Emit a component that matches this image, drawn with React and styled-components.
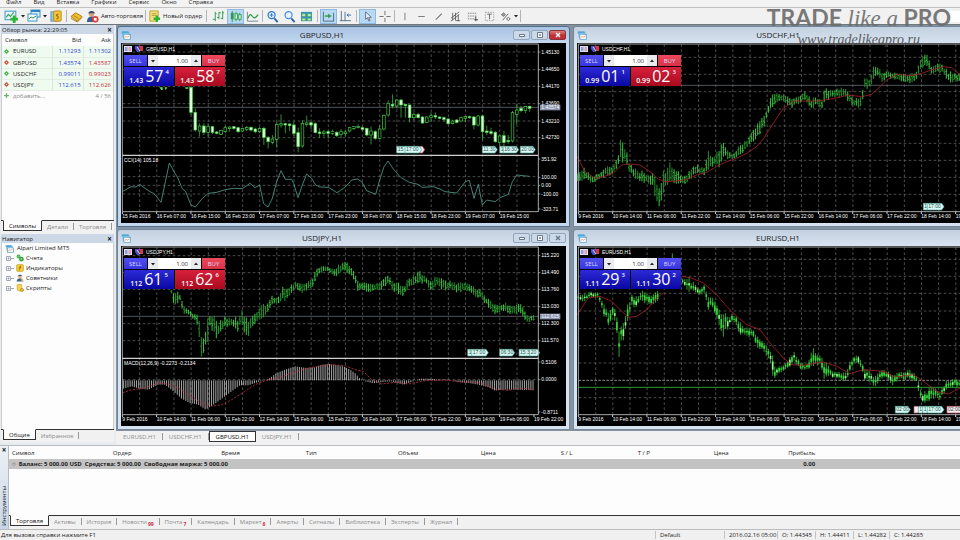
import React from "react";
import styled, { createGlobalStyle, css } from "styled-components";

const UI = '"Open Sans", "Noto Sans", sans-serif';

const Global = createGlobalStyle`
  * { box-sizing: border-box; }
  body { margin: 0; overflow: hidden; background: #f0f0f0; font: 6px/8px ${UI}; color: #1c1c1c; }
  button, input { font: inherit; color: inherit; margin: 0; padding: 0; border: 0; background: none; border-radius: 0; }
  table { border-collapse: collapse; border-spacing: 0; }
  ul { list-style: none; margin: 0; padding: 0; }
`;

const Shell = styled.div`
  position: relative;
  display: flex;
  flex-direction: column;
  height: 100vh;
  overflow: hidden;
`;

/* ---------- menu and toolbar ---------- */

const MenuBar = styled.nav`
  display: flex;
  gap: 12px;
  height: 8px;
  padding-left: 6px;
  background: #f3f3f3;
  border-bottom: 1px solid #c2c2c2;
`;
const MenuItem = styled.button`
  height: 5px;
  line-height: 5px;
`;
const ToolBar = styled.div`
  display: flex;
  align-items: center;
  height: 17px;
  padding-left: 3px;
  background: #f1f1f1;
  border-bottom: 1px solid #6f777e;
`;
const ToolButton = styled.button`
  display: flex;
  align-items: center;
  justify-content: center;
  gap: 2px;
  height: 15px;
  width: ${(p) => (p.$wide ? "auto" : "17px")};
  padding: ${(p) => (p.$wide ? "0 1px" : "0")};
  white-space: nowrap;
  ${(p) => p.$on && css`background: #b9d8f3; box-shadow: inset 0 0 0 1px #8dbbe4;`}
`;
const Split = styled.span`
  width: 1px;
  height: 12px;
  margin: 0 ${(p) => p.$gap || 1}px;
  background: #b4b4b4;
`;
const Search = styled.input`
  width: 13px;
  height: 11px;
  margin-left: auto;
  background: #fff;
`;

const glyphs = {
  newChart: <><rect x="1" y="2" width="10" height="8" fill="#e9f6ff" stroke="#4aa0c8" /><path d="M2 8l2-3 2 2 3-4" stroke="#2f9a52" fill="none" /><path d="M9.500 6v7M6 9.500h7" stroke="#2ab535" strokeWidth="2.600" /></>,
  profiles: <><rect x="4" y="1" width="9" height="7" fill="#d8eefb" stroke="#3f95c4" /><path d="M4 2h9" stroke="#2f83c0" strokeWidth="2" /><rect x="1" y="5" width="9" height="7" fill="#f3fbff" stroke="#3f95c4" /><path d="M2 10l2-2 2 1 3-2" stroke="#2f9a52" fill="none" /></>,
  market: <><rect x="1" y="2" width="8" height="10" fill="#8ec6e8" stroke="#5c93b8" /><rect x="4" y="1" width="8" height="11" rx="1" fill="#f3c63a" stroke="#b98a12" /><path d="M9 4.500H7.500L7 6.500h1.700v3H7" stroke="#8a5b08" fill="none" /></>,
  gold: <><path d="M1 7l5-4 7 4-5 5z" fill="#f0c02e" stroke="#a87b15" /><path d="M1 9l7 4 5-5M4 6l5 3" stroke="#a87b15" fill="none" /></>,
  robot: <><circle cx="6" cy="4" r="3" fill="#d9a172" /><path d="M2 3.500q4-5 8 0z" fill="#2e4a7c" /><path d="M1 13q0-6 5-6t5 6z" fill="#3a5c93" /><circle cx="10" cy="10" r="3.500" fill="#e2382c" /><rect x="8.500" y="8.500" width="3" height="3" fill="#fff" /></>,
  order: <><path d="M2 1h9v8l-3 3H2z" fill="#f4e07d" stroke="#c0a02e" /><path d="M4 4h5M4 6h5" stroke="#b7983a" /><path d="M9.500 6v7M6 9.500h7" stroke="#2ab535" strokeWidth="2.600" /></>,
  bars: <path d="M3.500 2v10M1 10h2.500M3.500 4H5M7.500 2v8M5.500 8h2M7.500 3h2M11.500 1v9M9.500 9h2M11.500 3H13" stroke="#2d9a50" fill="none" />,
  candles: <><path d="M3.500 1v12M7.500 2v10M11.500 3v9" stroke="#2d9a50" /><rect x="2" y="3" width="3" height="7" fill="#2d9a50" /><rect x="6.500" y="4" width="2.500" height="6" fill="#e6fff0" stroke="#2d9a50" /><rect x="10.500" y="5" width="2.500" height="5" fill="#e6fff0" stroke="#2d9a50" /></>,
  line: <><path d="M1.500 2v10H13" stroke="#6f8795" fill="none" /><path d="M2 9c2-5 3-5 5-2s4 1 6-2" stroke="#2ba043" strokeWidth="1.300" fill="none" /></>,
  zoomIn: <><circle cx="6" cy="5.500" r="3.800" fill="#dff0ff" stroke="#2f78cc" strokeWidth="1.300" /><path d="M9 9l3.500 4" stroke="#2f5fae" strokeWidth="2" /><path d="M6 3.500v4M4 5.500h4" stroke="#2f78cc" /></>,
  zoomOut: <><circle cx="6" cy="5.500" r="3.800" fill="#eaf5ff" stroke="#4a8ed6" strokeWidth="1.300" /><path d="M9 9l3.500 4" stroke="#2f5fae" strokeWidth="2" /></>,
  tile: <><rect x="1" y="2" width="12" height="10" fill="#3c8fc0" /><path d="M2 4h4v3H2zM8 4h4v3H8zM2 9h4v2.500H2zM8 9h4v2.500H8z" fill="#bdebb4" stroke="#3da24e" strokeWidth=".6" /></>,
  scroll: <><path d="M1.500 2v10H13M12.500 3v9" stroke="#4c6a86" fill="none" /><path d="M3 6.500h4" stroke="#2ba043" strokeWidth="1.500" /><path d="M6.500 4l4 2.500-4 2.500z" fill="#2ba043" /></>,
  shift: <><path d="M2.500 1v11M1 11.500h12M6.500 2v10" stroke="#54708e" fill="none" /><path d="M13 5.500H9M10.500 4L8.500 5.500l2 1.500" stroke="#3d6cae" fill="none" /></>,
  cursor: <path d="M5 2v8l2-1.800L8.500 12l1.200-.6L8.300 8H11z" fill="#eef4fb" stroke="#4f6276" strokeWidth=".9" />,
  cross: <path d="M7.500 1v4.500M7.500 8.500V13M1.500 7h4.500M9 7h4.500" stroke="#6a6a6a" fill="none" />,
  vline: <path d="M7.500 3v8" stroke="#777" />,
  hline: <path d="M3.500 7h7" stroke="#777" />,
  diag: <path d="M4 10.500L10.500 4" stroke="#666" strokeWidth="1.100" />,
  channel: <path d="M2 9l9-7M2 12l9-7M4 3v8M7 3v8M10 5v7M7 11.500h5" stroke="#555" fill="none" strokeWidth=".9" />,
  fibo: <><path d="M2 3.500h10M2 6.500h10M2 9.500h8" stroke="#777" fill="none" strokeDasharray="1.500 1" /><path d="M10.500 7v5M9 10.500h4" stroke="#444" fill="none" /></>,
  text: <><path d="M2.500 2.500h9v9h-9z" stroke="#999" fill="none" strokeDasharray="1.500 1.200" /><path d="M4.500 4.500h5M7 4.500v5.500" stroke="#666" fill="none" /></>,
  shapes: <><path d="M2.500 5L5 3l2 2-2 2z" fill="#999" stroke="#666" strokeWidth=".8" /><path d="M4 11l6-7M8 9.500l2-1.500 2 1.500-2 2z" stroke="#666" fill="none" /></>,
};

function Icon({ name, size = 13 }) {
  return <svg width={size} height={size} viewBox="0 0 14 14" aria-hidden="true">{glyphs[name]}</svg>;
}
function Arrow() {
  return <svg width="4" height="4" viewBox="0 0 4 4" aria-hidden="true"><path d="M0 1h4L2 3.500z" fill="#222" /></svg>;
}

const toolGroups = [
  { gap: 3, tools: [["bars"], ["candles", true], ["line"]] },
  { gap: 1, tools: [["zoomIn"], ["zoomOut"], ["tile"]] },
  { gap: 2, tools: [["scroll", true], ["shift"]] },
  { gap: 2, tools: [["cursor", true], ["cross"]] },
  { gap: 1, tools: [["vline"], ["hline"], ["diag"], ["channel"], ["fibo"], ["text"]] },
];

/* ---------- side panels ---------- */

const Main = styled.div`
  display: flex;
  flex: none;
`;
const Side = styled.aside`
  display: flex;
  flex-direction: column;
  flex: none;
  width: 116px;
  padding: 0 2px 3px 1px;
  background: #e9ecef;
`;
const Panel = styled.section`
  display: flex;
  flex-direction: column;
  flex: ${(p) => p.$grow} 0 0;
  min-height: 0;
`;
const PanelTitle = styled.header`
  display: flex;
  justify-content: space-between;
  align-items: center;
  height: 9px;
  padding: 0 1px;
  background: #ccd8e6;
`;
const Close = styled.button`
  width: 7px;
  font-size: 8px;
  line-height: 8px;
  font-weight: 700;
  color: #111;
`;
const PanelBody = styled.div`
  flex: 1;
  min-height: 0;
  background: #fdfdfd;
  border: 1px solid #c9cdd2;
  border-top: 0;
  border-bottom: 0;
`;
const Quotes = styled.table`
  width: 100%;
  th { height: 12px; padding: 0 2px 0 3px; font-weight: 400; text-align: right; }
  th:first-child { text-align: left; }
  td { height: 11px; padding: 0 2px; text-align: right; }
  td:first-child { text-align: left; }
`;
const QuoteRow = styled.tr`
  background: #f0fbf0;
  border-bottom: 1px solid #e2eee2;
  td + td { border-left: 1px solid #dde8dd; color: ${(p) => (p.$up ? "#2a3fd0" : "#c8283a")}; }
  td:nth-child(2) { color: #2a3fd0; }
`;
const AddRow = styled.tr`
  color: #8a8a8a;
`;
const SymbolCell = styled.span`
  display: flex;
  align-items: center;
  gap: 4px;
`;
const Tabs = styled.div`
  display: flex;
  flex: none;
  height: ${(p) => p.$tall || 13}px;
  padding-left: ${(p) => p.$indent || 2}px;
  background: #f1f1f1;
  ${(p) => p.$line && css`border-top: 1px solid #333;`}
`;
const Tab = styled.button`
  display: flex;
  align-items: center;
  height: 11px;
  padding: 0 ${(p) => p.$pad || 5}px;
  white-space: nowrap;
  color: #8b8b8b;
  &::after { content: ""; width: 1px; height: 7px; margin-left: ${(p) => p.$pad || 5}px; margin-right: -${(p) => p.$pad || 5}px; background: #999; }
  ${(p) => p.$on && css`
    color: #111;
    background: #fdfdfd;
    border: 1px solid #333;
    border-top-color: ${p.$box ? "#333" : "#fdfdfd"};
    margin-top: ${p.$box ? 0 : -1}px;
    &::after { display: none; }
  `}
`;
const Count = styled.sub`
  align-self: flex-end;
  padding-left: 1px;
  font-size: 5px;
  line-height: 5px;
  font-weight: 700;
  color: #d01f3c;
`;
const Tree = styled.ul`
  && { padding-left: 3px; }
`;
const TreeRow = styled.li`
  display: flex;
  align-items: center;
  gap: ${(p) => (p.$root ? 3 : 2)}px;
  height: 10px;
`;

function Dir({ up, plus }) {
  return (
    <svg width="5" height="5" viewBox="0 0 6 6" aria-hidden="true">
      {plus
        ? <path d="M3 0v6M0 3h6" stroke="#6fae6f" strokeWidth="1.500" />
        : <><path d="M3 0l3 3-3 3-3-3z" fill={up ? "#35b53b" : "#d5452f"} /><circle cx="3" cy="3" r=".8" fill="#fff" /></>}
    </svg>
  );
}
function Expander() {
  return <svg width="9" height="7" viewBox="0 0 9 7" aria-hidden="true"><path d="M1.500 1.500h4v4h-4zM2.500 3.500h2M3.500 2.500v2M6 3.500h3" fill="none" stroke="#8a94a4" strokeWidth=".8" /></svg>;
}

const treeGlyphs = {
  root: <><rect x="3" y="3" width="8" height="7" fill="#e9f6ff" stroke="#3f95c4" /><path d="M1 2h9v3H1z" fill="#4aaad8" /><rect x="4" y="6" width="9" height="7" fill="#fff" stroke="#4b95c4" /><path d="M5 11l2-2 2 1 3-2" stroke="#d87d3f" fill="none" /></>,
  acc: <><circle cx="4.500" cy="4.500" r="3.500" fill="#46b848" /><circle cx="9.500" cy="9" r="4" fill="#2f9d35" /><path d="M3 4h3M8 8h3M8 10h3" stroke="#d9ffd6" /></>,
  ind: <><rect x="1" y="1" width="12" height="12" rx="2" fill="#f2cd33" stroke="#bb9512" /><path d="M9 3.500Q7 3 7 6t-2 5M5 6.500h4" stroke="#5b4708" fill="none" /></>,
  exp: <><path d="M2 4l5-3 5 3z" fill="#25416e" /><circle cx="7" cy="5.500" r="2.500" fill="#e1ad7b" /><path d="M1 13q1-6 6-5 5-1 6 5z" fill="#3c6294" /><circle cx="11" cy="10.500" r="2" fill="#edc83b" /></>,
  scr: <><path d="M2 1h8v11H4l-2-3z" fill="#f5d44e" stroke="#bf9a1c" /><circle cx="10.500" cy="10.500" r="2.800" fill="#e9b92a" stroke="#a8801a" /></>,
};

const quotes = [
  ["EURUSD", "1.11293", "1.11302", true],
  ["GBPUSD", "1.43574", "1.43587", false],
  ["USDCHF", "0.99011", "0.99023", false],
  ["USDJPY", "112.615", "112.626", false],
];
const tree = [["acc", "Счета"], ["ind", "Индикаторы"], ["exp", "Советники"], ["scr", "Скрипты"]];

/* ---------- chart windows ---------- */

const Desk = styled.main`
  flex: 1;
  min-width: 0;
  background: #8593a1;
`;
const Windows = styled.div`
  display: grid;
  grid-template-columns: repeat(2, minmax(453px, 1fr));
  gap: 2px 3px;
  padding: 1px 0 1px 1px;
  overflow: hidden;
`;
const Frame = styled.section`
  padding: 0 3px 3px;
  border: 1px solid ${(p) => (p.$active ? "#50708f" : "#75879a")};
  border-radius: 3px 3px 0 0;
  background: ${(p) => (p.$active ? "linear-gradient(#a9c3e2, #c3d7ee 16px)" : "linear-gradient(#c3d0df, #d7e3f0 16px)")};
`;
const TitleBar = styled.header`
  display: flex;
  align-items: center;
  height: 16px;
`;
const Title = styled.h2`
  flex: 1;
  margin: 0;
  font-size: 8px;
  line-height: 12px;
  font-weight: 400;
  text-align: center;
`;
const TitleButtons = styled.div`
  display: flex;
  gap: 1px;
`;
const TitleButton = styled.button`
  display: flex;
  align-items: center;
  justify-content: center;
  width: 17px;
  height: 10px;
  border: 1px solid ${(p) => (p.$red ? "#8b3138" : "#92a5ba")};
  border-radius: 2px;
  background: ${(p) => (p.$red ? "linear-gradient(#db8179, #bd3038 55%)" : "#cbd9e8")};
`;
const Chart = styled.div`
  position: relative;
  height: 180px;
  overflow: hidden;
  background: #000;
  svg { display: block; }
`;
const Caption = styled.div`
  position: absolute;
  top: 3px;
  left: 3px;
  display: flex;
  align-items: center;
  gap: 3px;
  font: 5px/6px "Liberation Sans", sans-serif;
  color: #fff;
`;
const Ticket = styled.form`
  position: absolute;
  top: 12px;
  left: 3px;
  display: grid;
  grid-template-columns: 23px minmax(0, 1fr) 23px;
  grid-template-rows: 11px 19px;
  gap: 1px;
  width: 101px;
  background: #000;
`;
const tone = {
  blue: "linear-gradient(#5350f0, #3634de)",
  red: "linear-gradient(#ec4a5a, #d93048)",
  deepBlue: "linear-gradient(#2c2ad6, #0a08a2)",
  deepRed: "linear-gradient(#d8203c, #a80a1e)",
};
const Trade = styled.button`
  background: ${(p) => tone[p.$tone]};
  color: #d9dcff;
`;
const Volume = styled.div`
  display: flex;
  height: 11px;
  background: #fff;
  input { flex: 1; width: 100%; min-width: 0; padding-right: 3px; text-align: right; color: #333; }
`;
const Step = styled.button`
  display: flex;
  flex: none;
  align-items: center;
  justify-content: center;
  width: 10px;
  background: #e8eaee;
`;
const Prices = styled.div`
  grid-column: 1 / -1;
  display: grid;
  grid-template-columns: 1fr 1fr;
  gap: 1px;
`;
const Price = styled.button`
  display: flex;
  align-items: flex-end;
  justify-content: center;
  gap: 2px;
  padding-bottom: 1px;
  background: ${(p) => tone[p.$tone]};
  color: #fff;
  font-size: 7px;
  line-height: 8px;
  font-weight: 600;
  b { font-size: 16px; line-height: 17px; font-weight: 400; }
  sup { align-self: flex-start; margin-top: 1px; vertical-align: baseline; }
`;

const GRID = "#737373";
const LIME = "#46d246";
const STEP = 51.45;

// Linear interpolation over rows of [x, a, b, ...].
function sample(rows, x) {
  let i = 1;
  while (i < rows.length - 1 && rows[i][0] < x) i++;
  const p = rows[i - 1];
  const q = rows[i];
  const t = Math.min(1, Math.max(0, (x - p[0]) / (q[0] - p[0])));
  return p.slice(1).map((v, k) => v + (q[k + 1] - v) * t);
}
const noise = (n) => {
  const s = Math.sin(n * 127.1 + 11.7) * 43758.5453;
  return s - Math.floor(s);
};
const pairs = (s) => s.trim().split(/\s+/).map((p) => p.split(",").map(Number));
const range = (from, to, step) => Array.from({ length: Math.floor((to - from) / step) + 1 }, (_, i) => from + i * step);

function Bars({ rows, from, to, solid }) {
  const step = 6.43;
  return range(from, to, step).map((x, i) => {
    const [hi, lo] = sample(rows, x);
    const h = lo - hi;
    const top = hi + noise(i) * h * 0.35 - 3;
    const bottom = lo - noise(i + 500) * h * 0.35 + 3;
    const o = top + (bottom - top) * (0.2 + noise(i + 90) * 0.3);
    const c = bottom - (bottom - top) * (0.15 + noise(i + 190) * 0.3);
    if (solid) {
      return (
        <g key={x}>
          <path d={`M${x} ${top}V${bottom}`} stroke="#36c43a" strokeWidth="2.500" />
          <rect x={x - 2.5} y={o} width="5" height={Math.max(3, c - o)} fill={noise(i + 7) > 0.75 ? "#8cf587" : "#35d33a"} />
        </g>
      );
    }
    return <path key={x} d={`M${x} ${top}V${bottom}M${x - 3} ${o}H${x}M${x} ${c}h3`} stroke={noise(i + 3) > 0.4 ? "#40cf46" : "#289a2f"} strokeWidth="2.800" fill="none" />;
  });
}

// Each candle: body top, body bottom, wick top, wick bottom, falling flag.
const gbpCandles = pairs(`
187,262,187,270,1 262,315,250,320,1 303,318,295,335,0 303,322,295,330,1 305,322,295,335,0 305,322,303,328,1
321,325,318,328,1 316,328,314,330,0 308,320,303,325,0 306,311,304,320,0 305,310,303,315,1 308,320,306,324,1
310,318,308,322,0 307,313,303,318,0 307,315,304,320,1 312,320,308,325,1 310,320,306,325,0 310,337,305,360,1
337,350,333,370,1 342,352,330,358,0 298,343,290,368,0 296,300,268,308,0 296,300,293,325,1 297,302,295,318,1
300,325,290,333,1 323,365,308,382,1 295,363,285,368,0 294,298,272,305,0 293,300,290,312,1 296,323,292,325,1
321,325,310,338,1 321,325,315,335,0 320,325,315,340,1 320,325,314,330,0 322,332,318,336,1 320,328,312,340,0
321,326,316,334,0 308,318,306,322,0 305,310,303,315,0 304,308,298,310,0 308,313,305,318,1 310,330,308,334,1
318,330,305,358,0 320,340,316,344,1 312,340,300,342,0 272,312,268,316,0 235,270,226,275,0 238,243,208,250,1
225,243,222,250,0 225,240,222,278,1 238,242,238,278,1 240,278,238,292,1 268,278,262,285,0 268,278,264,280,1
276,294,274,296,1 276,292,274,294,0 272,277,262,290,0 272,276,262,282,1 276,280,274,283,1 278,283,274,290,1
282,296,278,300,1 288,296,284,298,0 285,292,282,295,1 278,288,275,290,0 274,280,272,292,0 275,278,272,282,1
276,300,273,313,1 273,300,270,304,0 273,320,270,345,1 318,322,302,330,1 320,325,308,330,1 322,350,318,353,1
333,352,328,362,0 332,352,318,372,1 346,350,330,356,1 263,348,258,352,0 255,268,236,298,0 250,257,242,262,1
244,256,242,264,0 244,250,242,260,1`);

function Candles() {
  return (
    <>
      <path d="M133 187h10v8h-4zM149 187h8l-5 9zM211 187h9v4h-9z" fill="#5fe55f" />
      {gbpCandles.map(([a, b, hi, lo, down], i) => {
        const x = 228 + i * 12.86;
        return (
          <g key={i} stroke={LIME} strokeWidth="2">
            <path d={`M${x} ${hi}V${lo}`} />
            <rect x={x - 4} y={a} width="8" height={b - a} fill={down ? "#dcf8dc" : "#000"} />
          </g>
        );
      })}
    </>
  );
}

const cci = "22,500 48,485 62,486 74,478 90,490 105,500 115,505 125,515 138,532 163,414 176,438 190,462 201,490 212,500 228,540 241,546 262,520 280,505 305,502 331,494 355,490 382,491 405,475 420,488 434,480 446,536 459,546 472,520 485,470 498,437 511,463 530,463 536,475 549,518 562,480 575,447 590,460 602,480 614,486 640,487 666,503 690,487 710,465 728,462 740,470 755,497 782,508 794,465 807,425 819,408 835,432 857,457 883,472 909,478 922,487 955,485 975,492 990,500 1025,504 1051,470 1063,466 1077,520 1090,478 1102,540 1115,525 1141,530 1155,518 1180,508 1192,470 1205,450 1243,454";
const chf = pairs("19,440,475 40,430,460 60,450,480 75,450,470 90,440,460 110,415,450 125,430,450 138,395,430 142,395,415 145,305,410 149,350,410 153,340,410 165,370,420 175,410,445 185,430,450 205,430,475 225,450,470 245,445,480 252,450,525 262,485,550 272,470,520 276,460,510 279,390,510 283,440,490 295,410,470 310,435,490 325,440,485 345,450,475 360,430,460 380,420,445 398,430,450 412,380,435 430,400,420 445,365,425 458,355,400 470,375,400 487,390,405 505,360,395 525,345,375 545,320,350 562,285,335 580,270,300 590,245,275 602,200,250 617,200,230 642,210,230 662,225,250 682,210,235 702,203,225 722,220,260 737,215,235 752,225,258 762,190,225 782,193,217 822,190,215 837,210,235 852,223,245 870,215,253 880,160,195 897,165,185 907,125,165 922,130,155 932,140,170 952,142,157 982,145,165 1012,150,175 1037,140,160 1052,90,130 1067,85,125 1082,125,150 1097,110,145 1112,120,140 1132,140,170 1162,145,170 1260,140,170");
const chfAverage = "19,395 42,440 72,460 97,455 127,445 152,420 177,417 207,420 237,440 262,463 282,470 317,468 347,463 377,450 407,442 437,425 467,410 497,400 527,385 557,365 577,342 597,310 637,250 667,228 742,228 792,220 832,210 872,215 902,208 927,185 947,165 977,148 1022,152 1052,145 1082,135 1117,125 1142,128 1165,148 1240,160";
const jpy = pairs("168,187,190 176,190,230 195,195,220 205,235,265 218,238,258 230,255,270 248,255,290 255,255,385 262,335,385 270,300,360 276,325,370 280,222,370 285,262,290 300,265,330 310,285,330 325,265,305 345,270,290 360,265,305 370,280,310 380,235,285 390,260,320 400,280,330 410,262,295 425,255,280 440,225,270 455,235,265 470,205,235 490,205,225 505,170,215 515,185,220 530,170,195 545,160,180 560,170,195 575,165,185 590,155,180 605,125,150 620,115,130 640,118,130 655,125,145 670,110,145 685,103,130 700,105,135 715,125,150 730,160,190 750,160,190 770,165,190 795,165,185 820,140,170 840,160,195 865,175,210 880,150,180 915,130,165 933,145,165 947,160,190 965,145,175 985,155,185 1005,160,185 1030,165,195 1050,165,185 1070,175,200 1095,185,210 1115,210,230 1135,220,260 1150,235,255 1170,225,245 1190,235,260 1215,225,255 1230,245,280 1240,265,285 1260,262,272");
const macd = pairs("22,483 50,475 75,482 100,485 130,470 150,470 175,490 200,512 225,525 250,530 272,545 300,527 330,505 350,490 375,472 400,472 430,462 450,457 465,450 485,435 510,425 540,415 575,420 600,418 620,410 645,408 685,415 705,425 720,435 735,452 750,460 775,466 800,462 830,460 865,470 890,462 915,452 945,452 970,455 1000,455 1030,462 1060,465 1090,470 1120,478 1140,488 1170,485 1200,485 1260,487");
const signal = "22,495 50,485 90,480 130,465 160,468 190,480 220,500 260,525 290,535 320,530 350,515 390,490 420,470 460,455 490,450 530,435 570,422 610,415 650,410 690,413 720,425 745,430 770,455 800,468 840,463 880,468 930,458 990,456 1040,462 1080,462 1110,470 1140,483 1180,487 1215,480 1260,485";
const eur = pairs("19,200,215 40,200,218 60,190,210 82,195,210 97,220,260 112,240,290 127,235,265 137,250,320 142,300,330 145,300,407 149,300,350 155,290,340 165,240,320 180,200,240 200,205,235 207,185,220 225,195,225 247,200,228 258,187,225 332,150,165 355,150,190 375,170,200 392,180,205 400,160,200 410,200,245 427,200,235 442,240,305 457,250,325 472,265,300 487,255,280 507,280,320 527,300,325 547,305,325 562,330,365 577,340,365 597,370,400 603,360,440 612,420,450 637,415,430 652,385,425 669,370,400 687,405,425 707,410,425 725,360,415 747,385,410 759,395,450 782,430,445 822,435,465 837,400,435 847,385,410 865,385,405 882,420,455 897,425,460 910,440,490 927,425,450 942,420,450 967,445,470 987,430,455 1012,425,455 1037,440,465 1047,480,510 1057,490,530 1072,485,525 1087,470,510 1107,490,515 1127,460,485 1147,455,475 1260,455,480");
const eurAverageA = "19,260 32,240 52,210 87,205 122,220 147,245 172,268 197,265 227,245 252,215 277,195";
const eurAverageB = "332,145 362,150 397,165 437,200 467,235 497,265 527,290 567,305 597,345 637,390 662,410 697,412 757,402 797,415 837,437 877,425 937,430 972,447 1027,440 1057,460 1097,490 1132,498 1167,480 1250,470";

const longTimes = ["9 Feb 2016", "10 Feb 14:00", "11 Feb 06:00", "11 Feb 22:00", "12 Feb 14:00", "15 Feb 06:00", "15 Feb 22:00", "16 Feb 14:00", "17 Feb 06:00", "17 Feb 22:00", "18 Feb 14:00", "19 Feb 06:00", "19 Feb 22:00"];
const gbpTimes = ["15 Feb 2016", "16 Feb 07:00", "16 Feb 15:00", "16 Feb 23:00", "17 Feb 07:00", "17 Feb 15:00", "17 Feb 23:00", "18 Feb 07:00", "18 Feb 15:00", "18 Feb 23:00", "19 Feb 07:00", "19 Feb 15:00"];

function Flag({ x, y = 364, w, label, warn }) {
  return (
    <g>
      <path d={`M${x} ${y}h${w - 7}l7 10-7 10H${x}z`} fill={warn ? "#fbe9ec" : "#dcfaf5"} stroke={warn ? "#b55a6c" : "#4fa79c"} strokeWidth="2" />
      <text x={x + 3} y={y + 15} fill="#1b4f4a">{label}</text>
    </g>
  );
}

// Three drawing units make one pixel; the plot starts at 18, 54.
function Plot({ levels, split, line, times, scale = [], tag, children }) {
  return (
    <svg width="445" height="180" viewBox="18 54 1335 540" fontFamily='"Liberation Sans", sans-serif' fontSize="15" fill="#fff">
      <g stroke={GRID} strokeWidth="2" strokeDasharray="8 7">
        {range(74, 1240, STEP).map((x) => <path key={x} d={`M${x} 58V560`} />)}
        {levels.map((y) => <path key={y} d={`M23 ${y}H1270`} />)}
      </g>
      {line && <path d={`M22 ${line}H1270`} stroke="#77808a" strokeWidth="2" />}
      {children}
      <path d="M22 560V57H1270V560H22" fill="none" stroke="#a8a8a8" strokeWidth="3" />
      {split && <path d="M22 391H1270" stroke="#d0d0d0" strokeWidth="4" />}
      {times.map((t, i) => <text key={t} x={22 + i * 102.9} y="580">{t}</text>)}
      {times.map((t, i) => <path key={t} d={`M${22 + i * 102.9} 560v7`} stroke="#ccc" strokeWidth="3" />)}
      {scale.map(([y, t]) => <g key={t}><path d={`M1270 ${y}h6`} stroke="#ccc" strokeWidth="2" /><text x="1279" y={y + 5}>{t}</text></g>)}
      {tag && <g><rect x="1275" y={line - 8} width="61" height="17" fill="#8993ae" /><text x="1279" y={line + 6} fill="#fff">{tag}</text></g>}
    </svg>
  );
}

function ChartWindow({ name, active, sell, buy, buyTone = "red", children }) {
  return (
    <Frame $active={active}>
      <TitleBar>
        <svg width="10" height="10" viewBox="0 0 14 14" aria-hidden="true">{treeGlyphs.root}</svg>
        <Title>{name},H1</Title>
        <TitleButtons>
          <TitleButton aria-label="Свернуть"><svg width="8" height="6" viewBox="0 0 8 6"><path d="M1.500 2.500h5v2h-5z" fill="#fff" stroke="#65788c" /></svg></TitleButton>
          <TitleButton aria-label="Развернуть"><svg width="8" height="6" viewBox="0 0 8 6"><path d="M1.500 .5h5v5h-5zM3.500 2.500h1v1h-1z" fill="#fff" stroke="#65788c" /></svg></TitleButton>
          <TitleButton aria-label="Закрыть" $red={active}>
            <svg width="6" height="6" viewBox="0 0 6 6"><path d="M1 1l4 4M5 1L1 5" stroke={active ? "#fff" : "#65788c"} strokeWidth="1.400" /></svg>
          </TitleButton>
        </TitleButtons>
      </TitleBar>
      <Chart>
        {children}
        <Caption>
          <svg width="8" height="6" viewBox="0 0 8 6"><rect width="8" height="6" fill="#dfe0f4" /><path d="M1 2h2.500M1 4h2.500" stroke="#4a55c8" /><path d="M4.500 2H7M4.500 4H7" stroke="#d0697a" /></svg>
          <svg width="8" height="6" viewBox="0 0 8 6"><path d="M0 0h4v6H2L0 3z" fill="#4a50d8" /><path d="M4 0h4v5H5z" fill="#d23a4a" /><path d="M2 1l3 4" stroke="#fff" strokeWidth=".8" /></svg>
          {name},H1
        </Caption>
        <Ticket onSubmit={(e) => e.preventDefault()}>
          <Trade type="button" $tone="blue">SELL</Trade>
          <Volume>
            <Step type="button" aria-label="Меньше"><Arrow /></Step>
            <input aria-label="Объем" defaultValue="1.00" />
            <Step type="button" aria-label="Больше"><svg width="4" height="4" viewBox="0 0 4 4"><path d="M0 3h4L2 .5z" fill="#222" /></svg></Step>
          </Volume>
          <Trade type="button" $tone={buyTone}>BUY</Trade>
          <Prices>
            <Price type="button" $tone="deepBlue">{sell[0]}<b>{sell[1]}</b><sup>{sell[2]}</sup></Price>
            <Price type="button" $tone={buyTone === "red" ? "deepRed" : "deepBlue"}>{buy[0]}<b>{buy[1]}</b><sup>{buy[2]}</sup></Price>
          </Prices>
        </Ticket>
      </Chart>
    </Frame>
  );
}

/* ---------- toolbox and status ---------- */

const Toolbox = styled.section`
  display: flex;
  flex: 1;
  min-height: 0;
  background: #fdfdfd;
  border-top: 1px solid #b9bdc2;
`;
const Rail = styled.header`
  display: flex;
  flex-direction: column;
  align-items: center;
  justify-content: space-between;
  width: 9px;
  padding-bottom: 3px;
  background: linear-gradient(#eef1f5, #c6d6e8);
  border-right: 1px solid #b5bdc6;
  span { writing-mode: vertical-rl; transform: rotate(180deg); line-height: 8px; }
`;
const ToolboxBody = styled.div`
  display: flex;
  flex-direction: column;
  flex: 1;
  min-width: 0;
`;
const Orders = styled.table`
  width: 100%;
  table-layout: fixed;
  th { height: 13px; padding: 0 3px; font-weight: 400; text-align: left; white-space: nowrap; }
  th:nth-child(10), td:nth-child(2) { text-align: right; }
  td { height: 10px; padding: 0 3px; background: #c3c3c3; font-weight: 700; white-space: pre; }
`;
const Filler = styled.div`
  flex: 1;
`;
const Status = styled.footer`
  display: flex;
  align-items: center;
  flex: none;
  height: 11px;
  background: #f0f0f0;
  border-top: 1px solid #bcbcbc;
`;
const Field = styled.span`
  width: ${(p) => p.$w}px;
  padding-left: 4px;
  border-left: 1px solid #c4c4c4;
  white-space: nowrap;
`;
const Help = styled.span`
  flex: 1;
  padding-left: 1px;
`;
const Mark = styled.div`
  position: absolute;
  top: 5px;
  right: 9px;
  display: flex;
  flex-direction: column;
  align-items: center;
  pointer-events: none;
  color: #6b6b6b;
  font: 700 23px/24px Lato, sans-serif;
  opacity: 0.9;
  white-space: pre;
  i { font: italic 400 23px/24px "Liberation Serif", serif; }
  small { font: italic 400 14px/18px "Liberation Serif", serif; color: #4c4c4c; }
`;

const columns = [["Символ", "10.6%"], ["Ордер", "11.4%"], ["Время", "8.9%"], ["Тип", "9.7%"], ["Объем", "8.7%"], ["Цена", "8.4%"], ["S / L", "8.1%"], ["T / P", "8%"], ["Цена", "7.5%"], ["Прибыль", "3.8%"], ["", "auto"]];
const toolboxTabs = [["Торговля"], ["Активы"], ["История"], ["Новости", "99"], ["Почта", "7"], ["Календарь"], ["Маркет", "6"], ["Алерты"], ["Сигналы"], ["Библиотека"], ["Эксперты"], ["Журнал"]];

export default function App() {
  return (
    <Shell>
      <Global />
      <MenuBar>
        {["Файл", "Вид", "Вставка", "Графики", "Сервис", "Окно", "Справка"].map((m) => <MenuItem key={m}>{m}</MenuItem>)}
      </MenuBar>
      <ToolBar role="toolbar">
        <ToolButton $wide aria-label="Новый график"><Icon name="newChart" size={15} /><Arrow /></ToolButton>
        <ToolButton $wide aria-label="Профили"><Icon name="profiles" size={14} /><Arrow /></ToolButton>
        <ToolButton aria-label="Маркет"><Icon name="market" /></ToolButton>
        <Split />
        <ToolButton aria-label="MQL5"><Icon name="gold" /></ToolButton>
        <ToolButton $wide><Icon name="robot" />Авто-торговля</ToolButton>
        <Split />
        <ToolButton $wide><Icon name="order" />Новый ордер</ToolButton>
        {toolGroups.map(({ gap, tools }, i) => (
          <React.Fragment key={i}>
            <Split $gap={gap} />
            {tools.map(([n, on]) => <ToolButton key={n} $on={on} aria-label={n}><Icon name={n} /></ToolButton>)}
          </React.Fragment>
        ))}
        <ToolButton $wide aria-label="Объекты"><Icon name="shapes" /><Arrow /></ToolButton>
        <Split />
        <Search aria-label="Поиск" />
      </ToolBar>

      <Main>
        <Side>
          <Panel $grow={209}>
            <PanelTitle>Обзор рынка: 22:29:05<Close aria-label="Закрыть">×</Close></PanelTitle>
            <PanelBody>
              <Quotes>
                <thead><tr><th>Символ</th><th>Bid</th><th>Ask</th></tr></thead>
                <tbody>
                  {quotes.map(([s, bid, ask, up], i) => (
                    <QuoteRow key={s} $up={up}>
                      <td><SymbolCell><Dir up={i % 2 === 0} />{s}</SymbolCell></td><td>{bid}</td><td>{ask}</td>
                    </QuoteRow>
                  ))}
                  <AddRow><td><SymbolCell><Dir plus />добавить...</SymbolCell></td><td /><td>4 / 56</td></AddRow>
                </tbody>
              </Quotes>
            </PanelBody>
            <Tabs $line $tall={14}><Tab $on>Символы</Tab><Tab>Детали</Tab><Tab>Торговля</Tab></Tabs>
          </Panel>
          <Panel $grow={208}>
            <PanelTitle>Навигатор<Close aria-label="Закрыть">×</Close></PanelTitle>
            <PanelBody>
              <Tree>
                <TreeRow $root><svg width="9" height="9" viewBox="0 0 14 14" aria-hidden="true">{treeGlyphs.root}</svg>Alpari Limited MT5</TreeRow>
                {tree.map(([g, t]) => <TreeRow key={g}><Expander /><svg width="8" height="8" viewBox="0 0 14 14" aria-hidden="true">{treeGlyphs[g]}</svg>{t}</TreeRow>)}
              </Tree>
            </PanelBody>
            <Tabs $line><Tab $on>Общие</Tab><Tab>Избранное</Tab></Tabs>
          </Panel>
        </Side>

        <Desk>
          <Windows>
            <ChartWindow name="GBPUSD" active sell={["1.43", "57", "4"]} buy={["1.43", "58", "7"]}>
              <Plot levels={[81, 134, 184, 236, 288, 338, 455, 481, 507]} split line={247} times={gbpTimes} tag="1.43574"
                scale={[[81, "1.45130"], [134, "1.44650"], [184, "1.44170"], [236, "1.43690"], [288, "1.43210"], [338, "1.42730"], [402, "351.92"], [457, "100.00"], [481, "0.00"], [507, "-100.00"], [552, "-323.71"]]}>
                <Candles />
                <polyline points={cci} fill="none" stroke="#4f9a8c" strokeWidth="2.500" />
                <text x="27" y="412">CCI(14) 105.18</text>
                <Flag x={915} w={14} warn />
                <Flag x={845} w={35} label="15:" /><Flag x={870} w={50} label="17:00" />
                <Flag x={1102} w={45} label="11:30" /><Flag x={1154} w={20} label="1" /><Flag x={1165} w={46} label="16:30" /><Flag x={1216} w={45} label="20:00" />
              </Plot>
            </ChartWindow>
            <ChartWindow name="USDCHF" sell={["0.99", "01", "1"]} buy={["0.99", "02", "3"]}>
              <Plot levels={[97, 148, 200, 252, 303, 355, 406, 457, 508]} line={181} times={longTimes}>
                <Bars rows={chf} from={20} to={1255} />
                <polyline points={chfAverage} fill="none" stroke="#a51f28" strokeWidth="2.500" />
                <Flag x={1057} y={535} w={20} label="1" /><Flag x={1069} y={535} w={50} label="17:00" />
              </Plot>
            </ChartWindow>
            <ChartWindow name="USDJPY" sell={["112", "61", "5"]} buy={["112", "62", "6"]}>
              <Plot levels={[83, 134, 184, 236, 287, 338, 455]} split line={265} times={longTimes} tag="112.615"
                scale={[[83, "115.220"], [134, "114.490"], [184, "113.760"], [236, "113.030"], [287, "112.300"], [338, "111.570"], [402, "0.5106"], [455, "0.0000"], [552, "-0.8711"]]}>
                <Bars rows={jpy} from={169} to={1258} />
                {range(26, 1258, 6.43).map((x) => <path key={x} d={`M${x} 457V${sample(macd, x)[0]}`} stroke="#b4b4b4" strokeWidth="2.800" />)}
                <polyline points={signal} fill="none" stroke="#b3303f" strokeWidth="2.500" strokeDasharray="7 4" />
                <text x="27" y="412">MACD(12,26,9) -0.2273 -0.2134</text>
                <Flag x={1058} w={20} label="1" /><Flag x={1070} w={50} label="17:00" />
                <Flag x={1154} w={45} label="06:30" /><Flag x={1212} w={40} label="15:3" /><Flag x={1244} w={30} label="20" />
              </Plot>
            </ChartWindow>
            <ChartWindow name="EURUSD" sell={["1.11", "29", "3"]} buy={["1.11", "30", "2"]} buyTone="blue">
              <Plot levels={[94, 145, 196, 249, 302, 353, 405, 509]} times={longTimes}>
                <path d="M22 457H1270" stroke="#a5a5a5" strokeWidth="2.500" strokeDasharray="8 4" />
                <path d="M22 478H1270" stroke="#2c9a34" strokeWidth="3" />
                <path d="M304 76V100" stroke="#36c43a" strokeWidth="2.500" />
                <Bars rows={eur} from={22} to={260} solid />
                <Bars rows={eur} from={335} to={1255} solid />
                <polyline points={eurAverageA} fill="none" stroke="#a51f28" strokeWidth="2.500" />
                <polyline points={eurAverageB} fill="none" stroke="#a51f28" strokeWidth="2.500" />
                <Flag x={973} y={535} w={45} label="02:00" />
                <Flag x={1029} y={535} w={18} warn /><Flag x={1042} y={535} w={18} label="1" /><Flag x={1055} y={535} w={20} label="1" /><Flag x={1069} y={535} w={50} label="17:00" />
                <Flag x={1128} y={535} w={50} label="02:00" warn />
              </Plot>
            </ChartWindow>
          </Windows>
          <Tabs $indent={1} $tall={14}>
            {["EURUSD,H1", "USDCHF,H1", "GBPUSD,H1", "USDJPY,H1"].map((t, i) => <Tab key={t} $pad={6} $on={i === 2} $box>{t}</Tab>)}
          </Tabs>
        </Desk>
      </Main>

      <Toolbox>
        <Rail><Close aria-label="Закрыть">×</Close><span>Инструменты</span></Rail>
        <ToolboxBody>
          <Orders>
            <colgroup>{columns.map(([, w], i) => <col key={i} width={w} />)}</colgroup>
            <thead><tr>{columns.map(([c], i) => <th key={i}>{c}</th>)}</tr></thead>
            <tbody>
              <tr><td colSpan="9">○  Баланс: 5 000.00 USD  Средства: 5 000.00  Свободная маржа: 5 000.00</td><td>0.00</td><td /></tr>
            </tbody>
          </Orders>
          <Filler />
          <Tabs $line $tall={14} $indent={1}>
            {toolboxTabs.map(([t, n], i) => <Tab key={t} $on={i === 0}>{t}{n && <Count>{n}</Count>}</Tab>)}
          </Tabs>
        </ToolboxBody>
      </Toolbox>
      <Status>
        <Help>Для вызова справки нажмите F1</Help>
        <Field $w={69}>Default</Field>
        <Field $w={53}>2016.02.16 05:00</Field>
        <Field $w={38}>O: 1.44345</Field>
        <Field $w={38}>H: 1.44411</Field>
        <Field $w={36}>L: 1.44282</Field>
        <Field $w={71}>C: 1.44285</Field>
      </Status>

      <Mark>
        <span>TRADE <i>like a</i> PRO</span>
        <small>www.tradelikeapro.ru</small>
      </Mark>
    </Shell>
  );
}
